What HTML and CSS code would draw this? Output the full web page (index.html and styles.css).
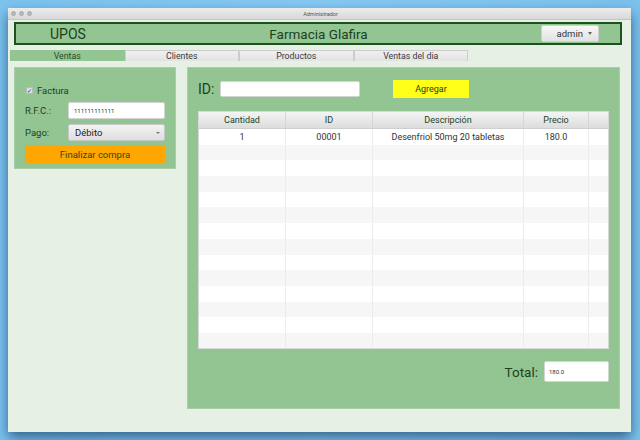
FILE: index.html
```html
<!DOCTYPE html>
<html lang="es">
<head>
<meta charset="utf-8">
<title>Administrador</title>
<link rel="stylesheet" href="styles.css">
</head>
<body>
<div class="window">
  <div class="titlebar">
    <div class="lights"><span></span><span></span><span></span></div>
    <div class="title">Administrador</div>
  </div>
  <div class="content">
    <header class="topbar">
      <div class="brand">UPOS</div>
      <div class="store">Farmacia Glafira</div>
      <div class="user">admin <span class="caret"></span></div>
    </header>
    <nav class="tabs">
      <div class="tab active">Ventas</div>
      <div class="tab">Clientes</div>
      <div class="tab">Productos</div>
      <div class="tab">Ventas del dia</div>
    </nav>
    <div class="panels">
      <section class="side">
        <label class="check"><span class="box">✓</span>Factura</label>
        <div class="field"><span class="flabel">R.F.C.:</span><div class="input small">111111111111</div></div>
        <div class="field"><span class="flabel">Pago:</span><div class="select">Débito <span class="caret"></span></div></div>
        <div class="buy">Finalizar compra</div>
      </section>
      <section class="main">
        <div class="idrow">
          <span class="idlabel">ID:</span>
          <div class="input idinput"></div>
          <div class="add">Agregar</div>
        </div>
        <div class="grid">
          <div class="ghead">
            <div class="c1">Cantidad</div><div class="c2">ID</div><div class="c3">Descripción</div><div class="c4">Precio</div><div class="c5"></div>
          </div>
          <div class="gbody">
            <div class="row"><div class="c1">1</div><div class="c2">00001</div><div class="c3">Desenfriol 50mg 20 tabletas</div><div class="c4">180.0</div><div class="c5"></div></div>
            <div class="row"><div class="c1"></div><div class="c2"></div><div class="c3"></div><div class="c4"></div><div class="c5"></div></div>
            <div class="row"><div class="c1"></div><div class="c2"></div><div class="c3"></div><div class="c4"></div><div class="c5"></div></div>
            <div class="row"><div class="c1"></div><div class="c2"></div><div class="c3"></div><div class="c4"></div><div class="c5"></div></div>
            <div class="row"><div class="c1"></div><div class="c2"></div><div class="c3"></div><div class="c4"></div><div class="c5"></div></div>
            <div class="row"><div class="c1"></div><div class="c2"></div><div class="c3"></div><div class="c4"></div><div class="c5"></div></div>
            <div class="row"><div class="c1"></div><div class="c2"></div><div class="c3"></div><div class="c4"></div><div class="c5"></div></div>
            <div class="row"><div class="c1"></div><div class="c2"></div><div class="c3"></div><div class="c4"></div><div class="c5"></div></div>
            <div class="row"><div class="c1"></div><div class="c2"></div><div class="c3"></div><div class="c4"></div><div class="c5"></div></div>
            <div class="row"><div class="c1"></div><div class="c2"></div><div class="c3"></div><div class="c4"></div><div class="c5"></div></div>
            <div class="row"><div class="c1"></div><div class="c2"></div><div class="c3"></div><div class="c4"></div><div class="c5"></div></div>
            <div class="row"><div class="c1"></div><div class="c2"></div><div class="c3"></div><div class="c4"></div><div class="c5"></div></div>
            <div class="row"><div class="c1"></div><div class="c2"></div><div class="c3"></div><div class="c4"></div><div class="c5"></div></div>
            <div class="row"><div class="c1"></div><div class="c2"></div><div class="c3"></div><div class="c4"></div><div class="c5"></div></div>
          </div>
        </div>
        <div class="totalrow">
          <span class="tlabel">Total:</span>
          <div class="input total small">180.0</div>
        </div>
      </section>
    </div>
  </div>
</div>
</body>
</html>
```
FILE: styles.css
```css
* { box-sizing: border-box; }
html, body { margin: 0; padding: 0; }
body {
  width: 640px;
  height: 440px;
  overflow: hidden;
  background: linear-gradient(90deg, #7cc4f0 0%, #86c9f2 50%, #7cc2ee 100%);
  font-family: Roboto, "Liberation Sans", sans-serif;
  padding: 8px 9px 0 8px;
}
.window {
  width: 623px;
  height: 424px;
  background: #e6f0e5;
  box-shadow: 0 6px 12px rgba(20, 60, 100, 0.7);
  display: flex;
  flex-direction: column;
}
.titlebar {
  height: 12px;
  background: linear-gradient(#ececec, #d8d8d8);
  border-bottom: 1px solid #c4c4c4;
  display: flex;
  align-items: center;
  padding-left: 3px;
}
.lights { display: flex; gap: 3px; }
.lights span {
  width: 5px; height: 5px; border-radius: 50%;
  background: #b9b9b9;
  border: 1px solid #a9a9a9;
}
.title {
  flex: 1;
  text-align: center;
  font-size: 5.5px;
  color: #555;
  margin-right: 22px;
}
.content {
  flex: 1;
  display: flex;
  flex-direction: column;
  padding: 2px 9px 0 6px;
}
.topbar {
  height: 23px;
  background: #93c592;
  border: 2px solid #1c521c;
  display: flex;
  align-items: center;
  color: #1c421c;
}
.brand {
  font-size: 14px;
  margin-left: 34px;
  width: 60px;
}
.store {
  flex: 1;
  text-align: center;
  font-size: 13.5px;
  padding-right: 14px;
}
.user {
  width: 58px;
  height: 17px;
  margin-right: 21px;
  background: linear-gradient(#f7f7f7, #e2e2e2);
  border: 1px solid #cfcfcf;
  border-radius: 2px;
  font-size: 9.5px;
  color: #333;
  display: flex;
  align-items: center;
  justify-content: flex-end;
  padding-right: 6px;
  gap: 5px;
}
.caret {
  width: 0; height: 0;
  border-left: 2.5px solid transparent;
  border-right: 2.5px solid transparent;
  border-top: 3px solid #666;
}
.tabs {
  display: flex;
  margin: 5px 0 0 -4px;
  height: 11px;
}
.tab {
  width: 114.5px;
  height: 11px;
  background: linear-gradient(#f0f0f0, #e2e2e2);
  border: 1px solid #cdcdcd;
  border-bottom: none;
  font-size: 8.8px;
  line-height: 10px;
  text-align: center;
  color: #3a3a3a;
}
.tab.active {
  background: #93c592;
  border-color: #93c592;
  color: #2a4a2a;
}
.panels {
  display: flex;
  align-items: flex-start;
  gap: 11px;
  margin-top: 6px;
}
.side {
  width: 162px;
  height: 102px;
  background: #93c592;
  border: 1px solid #a9cfa8;
  padding: 18px 10px 0 10px;
  display: flex;
  flex-direction: column;
  color: #1c421c;
}
.check {
  display: flex;
  align-items: center;
  font-size: 9.5px;
  height: 8px;
  margin-left: 1px;
  gap: 4px;
}
.box {
  width: 7px; height: 7px;
  background: #ddd;
  border: 1px solid #bbb;
  font-size: 6px;
  line-height: 6px;
  text-align: center;
  color: #333;
}
.field {
  display: flex;
  align-items: center;
  height: 17px;
  margin-top: 5px;
}
.check + .field { margin-top: 8px; }
.flabel {
  width: 43px;
  font-size: 9.5px;
}
.input {
  background: #fff;
  border: 1px solid #d4d4d4;
  border-radius: 2px;
}
.side .input {
  flex: 1;
  height: 17px;
  display: flex;
  align-items: center;
  padding-left: 5px;
}
.small { font-size: 6px; color: #333; }
.select {
  flex: 1;
  height: 17px;
  background: linear-gradient(#f3f3f3, #dedede);
  border: 1px solid #c8c8c8;
  border-radius: 2px;
  display: flex;
  align-items: center;
  justify-content: space-between;
  padding: 0 4px 0 6px;
  font-size: 9.5px;
  color: #222;
}
.select .caret { border-top-color: #777; border-left-width: 2px; border-right-width: 2px; border-top-width: 2px; }
.buy {
  margin-top: 4px;
  height: 18px;
  background: #ffa600;
  font-size: 9.5px;
  color: #2a4a1c;
  display: flex;
  align-items: center;
  justify-content: center;
}
.main {
  width: 433px;
  height: 342px;
  background: #93c592;
  border: 1px solid #a9cfa8;
  padding: 12px 10px 0 10px;
  display: flex;
  flex-direction: column;
  color: #1c421c;
}
.idrow {
  display: flex;
  align-items: center;
  height: 18px;
}
.idlabel { font-size: 14px; width: 22px; }
.idinput { width: 140px; height: 16px; }
.add {
  margin-left: 33px;
  width: 76px;
  height: 18px;
  background: #ffff1a;
  font-size: 9px;
  color: #2a3a1c;
  display: flex;
  align-items: center;
  justify-content: center;
}
.grid {
  margin-top: 13px;
  width: 411px;
  background: #fff;
  border: 1px solid #d8d8d8;
}
.ghead, .row { display: flex; }
.ghead {
  height: 17px;
  background: linear-gradient(#f4f4f4, #dcdcdc);
  border-bottom: 1px solid #cfcfcf;
  font-size: 9px;
  color: #1c421c;
  align-items: center;
}
.ghead > div, .row > div {
  text-align: center;
  border-right: 1px solid #ececec;
  height: 100%;
  display: flex;
  align-items: center;
  justify-content: center;
}
.ghead > div { border-right-color: #d6d6d6; }
.c1 { width: 87px; }
.c2 { width: 87px; }
.c3 { width: 151px; }
.c4 { width: 65px; }
.c5 { flex: 1; border-right: none !important; }
.gbody {
  height: 219px;
  overflow: hidden;
}
.row {
  height: 15.7px;
  font-size: 9px;
  color: #333;
}
.row:nth-child(even) { background: #f6f6f6; }
.totalrow {
  margin-top: 12px;
  display: flex;
  justify-content: flex-end;
  align-items: center;
  gap: 6px;
}
.tlabel { font-size: 13.5px; }
.total {
  width: 65px;
  height: 21px;
  display: flex;
  align-items: center;
  padding-left: 4px;
}
```
